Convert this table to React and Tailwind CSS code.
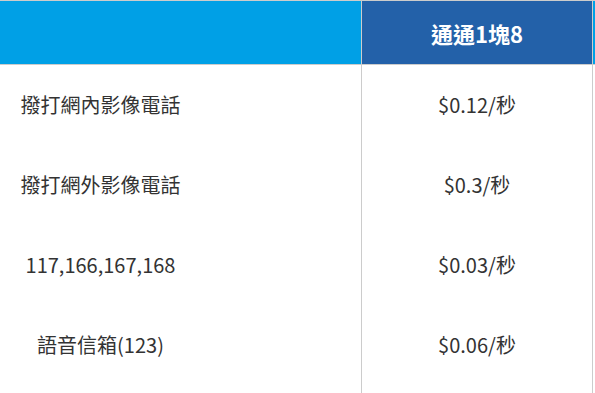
const ROWS = [
  ['撥打網內影像電話', '$0.12/秒'],
  ['撥打網外影像電話', '$0.3/秒'],
  ['117,166,167,168', '$0.03/秒'],
  ['語音信箱(123)', '$0.06/秒'],
]

export default function App() {
  return (
    <div className="w-[595px] h-[393px] overflow-hidden bg-white text-[#333] flex flex-col font-['Noto_Sans_CJK_TC','Noto_Sans',sans-serif]">
      {/* header */}
      <div className="flex h-[65px] shrink-0 border-y border-[#cccccc]">
        <div className="w-[362px] shrink-0 bg-[#00a0e6] border-r border-[#cccccc]" />
        <div className="w-[231px] shrink-0 bg-[#2361a9] border-r border-[#cccccc] flex items-center justify-center text-white font-bold text-[22px] leading-none">
          通通1塊8
        </div>
        <div className="flex-1 bg-[#00a0e6]" />
      </div>

      {/* rows */}
      {ROWS.map(([name, price]) => (
        <div key={name} className="flex h-[80px] shrink-0">
          <div className="w-[362px] shrink-0 border-r border-[#cccccc] flex items-center">
            <div className="w-[201px] text-center text-[20px] leading-none">{name}</div>
          </div>
          <div className="w-[231px] shrink-0 border-r border-[#cccccc] flex items-center justify-center text-[20px] leading-none">
            {price}
          </div>
          <div className="flex-1" />
        </div>
      ))}

      {/* next row, cut off */}
      <div className="flex flex-1 min-h-[80px]">
        <div className="w-[362px] shrink-0 border-r border-[#cccccc]" />
        <div className="w-[231px] shrink-0 border-r border-[#cccccc]" />
        <div className="flex-1" />
      </div>
    </div>
  )
}
